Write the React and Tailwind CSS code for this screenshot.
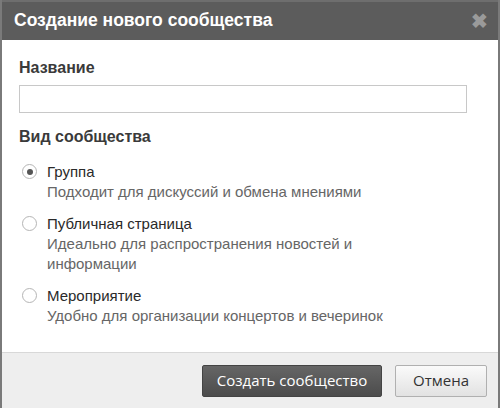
import React, { useState } from 'react';

const options = [
  { id: 'group', title: 'Группа', desc: 'Подходит для дискуссий и обмена мнениями' },
  { id: 'public', title: 'Публичная страница', desc: 'Идеально для распространения новостей и информации' },
  { id: 'event', title: 'Мероприятие', desc: 'Удобно для организации концертов и вечеринок' },
];

export default function App() {
  const [kind, setKind] = useState('group');
  const [name, setName] = useState('');

  return (
    <div className="w-[500px] h-[408px] flex flex-col bg-white border-x-2 border-[#7a7a7a] font-['Liberation_Sans',Arial,sans-serif]">
      {/* header */}
      <div className="h-[40px] shrink-0 flex items-center justify-between bg-[#5c5c5c] border-t-2 border-[#6e6e6e] pl-[12px] pr-[10px]">
        <span className="text-white font-bold text-[17.5px] leading-none">Создание нового сообщества</span>
        <span className="text-[#9a9a9a] font-bold text-[20px] leading-none">✖</span>
      </div>

      {/* body */}
      <div className="flex-1 flex flex-col pl-[17px] pr-[31px] pt-[19px]">
        <div className="text-[16px] font-bold text-[#3a3a3a] leading-[18px]">Название</div>
        <input
          value={name}
          onChange={e => setName(e.target.value)}
          className="mt-[8px] h-[28px] w-full border border-[#c8c8c8] outline-none px-2 text-[14px]"
        />
        <div className="mt-[15px] text-[16px] font-bold text-[#3a3a3a] leading-[18px]">Вид сообщества</div>

        <div className="mt-[16px] flex flex-col gap-[12px]">
          {options.map(o => (
            <label key={o.id} className="flex items-start cursor-pointer" onClick={() => setKind(o.id)}>
              <span className="mt-[2px] ml-[3px] w-[15px] h-[15px] rounded-full border border-[#b5b5b5] bg-white flex items-center justify-center shrink-0">
                {kind === o.id && <span className="w-[6px] h-[6px] rounded-full bg-[#555]" />}
              </span>
              <span className="ml-[10px] flex flex-col">
                <span className="text-[15px] text-[#2a2a2a] leading-[20px]">{o.title}</span>
                <span className="text-[15px] text-[#666] leading-[20px] max-w-[350px]">{o.desc}</span>
              </span>
            </label>
          ))}
        </div>
      </div>

      {/* footer */}
      <div className="h-[56px] shrink-0 bg-[#eeeeee] border-t border-[#d8d8d8] flex items-center justify-end gap-[13px] pr-[11px]">
        <button className="h-[32px] w-[180px] rounded-[2px] bg-gradient-to-b from-[#666] to-[#4c4c4c] border border-[#444] text-white text-[15px] font-['Open_Sans',sans-serif]">
          Создать сообщество
        </button>
        <button className="h-[32px] w-[92px] rounded-[2px] bg-gradient-to-b from-[#fafafa] to-[#e2e2e2] border border-[#b0b0b0] text-[#333] text-[15px] font-['Open_Sans',sans-serif]">
          Отмена
        </button>
      </div>
    </div>
  );
}
